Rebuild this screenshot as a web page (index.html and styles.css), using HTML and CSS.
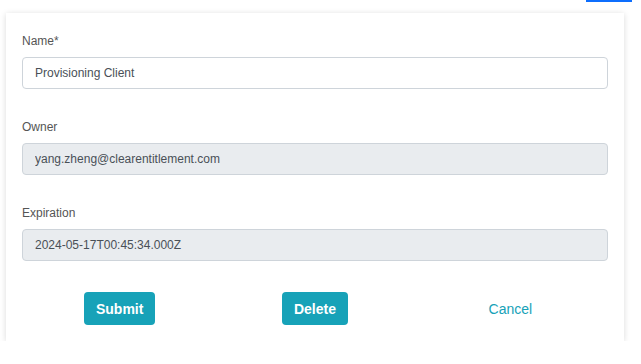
FILE: index.html
```html
<!DOCTYPE html>
<html lang="en">
<head>
    <meta charset="UTF-8">
    <meta name="viewport" content="width=device-width, initial-scale=1.0">
    <title>Edit Client</title>
    <link rel="stylesheet" href="styles.css">
</head>
<body>

    <div class="top-bar">
        <span class="top-bar-btn"></span>
    </div>

    <div class="form-card">
        <form id="clientForm">
            <div class="form-group">
                <label for="name">Name*</label>
                <input type="text" id="name" name="name" value="Provisioning Client">
            </div>

            <div class="form-group">
                <label for="owner">Owner</label>
                <input type="text" id="owner" name="owner" value="yang.zheng@clearentitlement.com" disabled>
            </div>

            <div class="form-group">
                <label for="expiration">Expiration</label>
                <input type="text" id="expiration" name="expiration" value="2024-05-17T00:45:34.000Z" disabled>
            </div>

            <div class="form-actions">
                <div class="action-cell"><button type="submit" class="btn">Submit</button></div>
                <div class="action-cell"><button type="button" class="btn">Delete</button></div>
                <div class="action-cell"><button type="button" class="btn-link">Cancel</button></div>
            </div>
        </form>
    </div>

</body>
</html>
```

FILE: styles.css
```css
body {
    margin: 0;
    font-family: "Liberation Sans", Arial, sans-serif;
    background: #fff;
    color: #495057;
}

.top-bar {
    height: 13px;
    display: flex;
    justify-content: flex-end;
    padding-right: 9px;
}

.top-bar-btn {
    width: 46px;
    height: 2px;
    background-color: #0d6efd;
}

.form-card {
    width: 618px;
    margin-left: 6px;
    box-sizing: border-box;
    padding: 21px 16px 16px;
    background: #fff;
    box-shadow: 0 1px 6px rgba(0, 0, 0, 0.15);
}

.form-group {
    margin-bottom: 31px;
}

.form-group label {
    display: block;
    font-size: 12px;
    line-height: 14px;
    color: #555;
    margin-bottom: 9px;
}

.form-group input {
    display: block;
    width: 100%;
    height: 32px;
    box-sizing: border-box;
    padding: 0 12px;
    border: 1px solid #ced4da;
    border-radius: 4px;
    font-family: inherit;
    font-size: 12px;
    color: #495057;
    background: #fff;
}

.form-group input:disabled {
    background-color: #e9ecef;
    color: #495057;
}

.form-actions {
    display: grid;
    grid-template-columns: 1fr 1fr 1fr;
    align-items: center;
}

.action-cell {
    text-align: center;
}

.btn {
    height: 33px;
    padding: 0 12px;
    background-color: #17a2b8;
    color: #fff;
    border: none;
    border-radius: 4px;
    font-family: inherit;
    font-size: 14px;
    font-weight: bold;
    cursor: pointer;
}

.btn-link {
    background: none;
    border: none;
    color: #17a2b8;
    font-family: inherit;
    font-size: 14px;
    cursor: pointer;
}
```
